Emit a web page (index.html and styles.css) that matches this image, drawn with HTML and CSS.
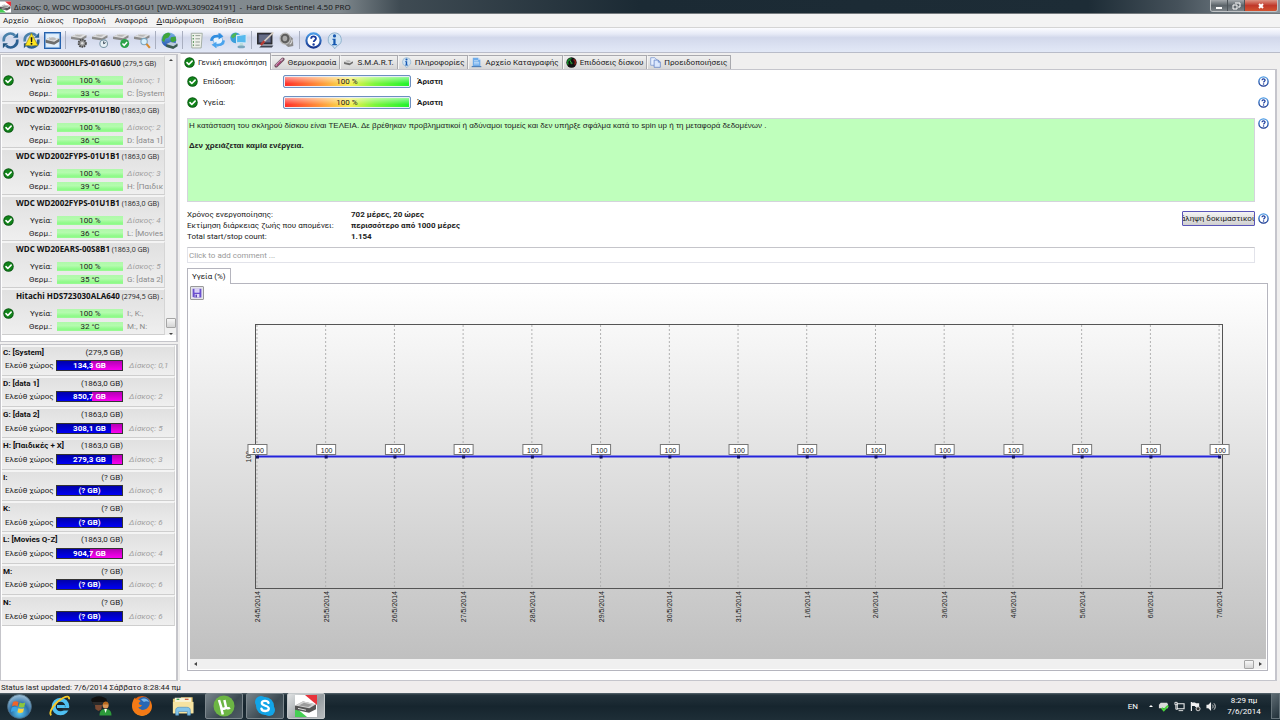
FILE: index.html
```
<!DOCTYPE html>
<html lang="el">
<head>
    <meta charset="UTF-8">
    <meta name="viewport" content="width=device-width, initial-scale=1.0">
    <title>Hard Disk Sentinel 4.50 PRO</title>
    <link rel="stylesheet" href="styles.css">
</head>
<body>
    <svg class="sprite" aria-hidden="true">
        <defs>
            <linearGradient id="g-blue" x1="0" y1="0" x2="0" y2="1"><stop offset="0" stop-color="#7fb6e8"/><stop offset="1" stop-color="#1d4fae"/></linearGradient>
            <linearGradient id="g-help" x1="0" y1="0" x2="0" y2="1"><stop offset="0" stop-color="#4a9be6"/><stop offset="1" stop-color="#16358f"/></linearGradient>
            <radialGradient id="g-orb" cx="50%" cy="75%" r="75%"><stop offset="0" stop-color="#5fd0f5"/><stop offset=".5" stop-color="#2a6fa8"/><stop offset="1" stop-color="#a7c4d8"/></radialGradient>
            <radialGradient id="g-fox" cx="50%" cy="70%" r="70%"><stop offset="0" stop-color="#ffc22a"/><stop offset="1" stop-color="#e0560c"/></radialGradient>
        </defs>
        <symbol id="i-ok" viewBox="0 0 16 16"><circle cx="8" cy="8" r="7.6" fill="#0a5a12"/><circle cx="8" cy="8" r="6.3" fill="#11841a"/><path d="M4.4 8.2l2.6 2.7 4.8-5" fill="none" stroke="#fff" stroke-width="2.4" stroke-linecap="round" stroke-linejoin="round"/></symbol>
        <symbol id="i-help" viewBox="0 0 16 16"><circle cx="8" cy="8" r="6.7" fill="#fff" stroke="url(#g-help)" stroke-width="2"/><path d="M5.8 6.3c0-2.9 4.6-2.8 4.5-.1 0 1.6-2.1 1.5-2.1 3.3" fill="none" stroke="#17399c" stroke-width="1.7"/><circle cx="8.1" cy="11.8" r="1.1" fill="#17399c"/></symbol>
        <symbol id="i-info" viewBox="0 0 16 16"><path d="M8 .8a6.6 6.4 0 0 1 2.6 12.2L8.2 15.8 6.4 13.2A6.5 6.4 0 0 1 8 .8z" fill="#cfe3f3" stroke="#86abc8" stroke-width=".8"/><circle cx="8" cy="3.7" r="1.5" fill="#1557b0"/><path d="M6 6.3h3v5h1.2v1.2H5.9v-1.2h1V7.4H6z" fill="#1557b0"/></symbol>
        <symbol id="i-refresh" viewBox="0 0 16 16"><path d="M1.8 9A6.2 6.2 0 0 1 12.2 3.3" fill="none" stroke="#4a80ab" stroke-width="2.5"/><path d="M14.2 7A6.2 6.2 0 0 1 3.8 12.7" fill="none" stroke="#2b5f92" stroke-width="2.5"/><path d="M10.4 5.4h4.8V.8z" fill="#2a6496"/><path d="M5.6 10.6H.8v4.6z" fill="#23547f"/></symbol>
        <symbol id="i-warn" viewBox="0 0 16 16"><use href="#i-refresh"/><path d="M8 1.2l6 11.6H2z" fill="#ffe51e" stroke="#8d8410" stroke-width=".6"/><path d="M7.2 5h1.7l-.3 4.4H7.5z" fill="#111"/><circle cx="8" cy="11" r=".9" fill="#111"/></symbol>
        <symbol id="i-disk" viewBox="0 0 16 16"><path d="M1.5 7.4L6 4.8l8.5 1.6v2.5L9.6 12 1.5 10z" fill="#6e6e6e"/><path d="M1.5 7.2L6 4.6l8.5 1.6-4.9 3z" fill="#e4e4e4"/><ellipse cx="8" cy="6.7" rx="3.3" ry="1.2" fill="#bbb"/></symbol>
        <symbol id="i-diskbox" viewBox="0 0 16 16"><rect x=".6" y=".6" width="14.8" height="14.8" fill="#a9cdf2" stroke="#2561ad" stroke-width="1.2"/><rect x="2" y="2" width="12" height="12" fill="#e2effc"/><use href="#i-disk"/></symbol>
        <symbol id="i-drive" viewBox="0 0 16 16"><path d="M0 4.4l5.6-2.6 9 1.3v2L9.5 8 0 6.7z" fill="#8a8a8a"/><path d="M0 4.2l5.6-2.6 9 1.3-5.1 3z" fill="#dedede"/><path d="M3 3.8l3-1.2 5 .8-2.5 1.1z" fill="#b4b4b4"/></symbol>
        <symbol id="i-drive-gear" viewBox="0 0 16 16"><use href="#i-drive"/><circle cx="10.6" cy="10.6" r="3.4" fill="#999" stroke="#4b4b4b" stroke-width="1.8" stroke-dasharray="1.5 .7"/><circle cx="10.6" cy="10.6" r="1.2" fill="#ddd"/></symbol>
        <symbol id="i-drive-clock" viewBox="0 0 16 16"><use href="#i-drive"/><circle cx="11" cy="11" r="3.6" fill="#e7f0f5" stroke="#7995a5"/><path d="M11 11V8.8M11 11l1.8-1" stroke="#234" stroke-width=".9"/></symbol>
        <symbol id="i-drive-ok" viewBox="0 0 16 16"><use href="#i-drive"/><circle cx="11" cy="10.8" r="4.2" fill="#2ca34a"/><path d="M8.9 10.8l1.6 1.7 2.8-3.1" fill="none" stroke="#fff" stroke-width="1.4"/></symbol>
        <symbol id="i-drive-find" viewBox="0 0 16 16"><use href="#i-drive"/><circle cx="9.5" cy="9" r="3" fill="#d6effc" stroke="#7ca5be"/><path d="M11.7 11.2l3.2 3.8" stroke="#d88b2f" stroke-width="2"/></symbol>
        <symbol id="i-globe" viewBox="0 0 16 16"><circle cx="7.4" cy="7.4" r="7" fill="url(#g-blue)"/><path d="M2 3.5C5-.4 8 .6 9 2L7 5.2 4 6.3 3 9.6.9 8zM9.4 5l4.4-.8.5 4-3.6 1.6-2-2z" fill="#3fa53a"/><path d="M5 11.6l4-2 6.6 1.5v2.3L11.5 16 5 14z" fill="#3b5a50"/><path d="M5 11.4l4-2 6.6 1.5-4 2.4z" fill="#bcd"/></symbol>
        <symbol id="i-report" viewBox="0 0 16 16"><path d="M3 1.2h10.4L12.4 15H3.6z" fill="#eef1ea" stroke="#9ba59b" stroke-width=".8"/><path d="M4.4 3.4h1M4.4 6.4h1M4.6 9.4h1M4.6 12.4h1" stroke="#367f3d" stroke-width="1.3"/><path d="M7 3.4h4.6M7 6.4h4.3M7 9.4h4.2M7 12.4h4" stroke="#929a92" stroke-width=".9"/></symbol>
        <symbol id="i-send" viewBox="0 0 16 16"><path d="M3 4.6l8-3 3 9.5-8 3.2z" fill="#e8f4ff" stroke="#6aa6dc" stroke-width=".7"/><path d="M1 8.2C1.4 3.6 5 2 9 3V.8L13.6 4 9 7V5.2C6 4.7 4 5.6 3.4 8.4z" fill="#2f8de0"/><path d="M15 8c-.4 4.4-4 6-8 5v2.2L2.4 12 7 9.2V11c3 .5 5-.4 5.6-3.2z" fill="#4ba4ee"/></symbol>
        <symbol id="i-remote" viewBox="0 0 16 16"><circle cx="5.3" cy="5.5" r="5" fill="#3c9edb"/><path d="M1 4.4C2 1.5 4.5.4 6.5 1L5.4 4.1 2.8 6z" fill="#4fb556"/><path d="M6.2 3.4l9-1.2v8.2l-9-.6z" fill="#56b9ee" stroke="#dcecf6" stroke-width="1"/><path d="M9.5 10.4h2.5l.8 3.4H8.4z" fill="#bdd"/><ellipse cx="10.6" cy="14" rx="3.6" ry="1.2" fill="#7aa6bd"/></symbol>
        <symbol id="i-config" viewBox="0 0 16 16"><rect x=".6" y="1.2" width="13.4" height="10" fill="#3b3f56" stroke="#222"/><rect x="2" y="2.6" width="10.6" height="7" fill="#666d87"/><path d="M2 14.6h12l1.4-2H4.2z" fill="#3d4350"/><path d="M15.4.4L5 10.6" stroke="#d9d0c5" stroke-width="1.6"/><path d="M7 8.6l-3.4 3.6" stroke="#b73a33" stroke-width="2.2"/></symbol>
        <symbol id="i-sound" viewBox="0 0 16 16"><path d="M2 3.2L8 .6l6 5.4.4 7.2-4.8 1L2 8z" fill="#8a8a8a"/><ellipse cx="6.7" cy="6.2" rx="4.8" ry="5.2" fill="#5e5e5e" stroke="#bbb" stroke-width="1.1"/><ellipse cx="6.5" cy="6.2" rx="2.2" ry="2.6" fill="#aaa"/><path d="M11 11.6c1.8-1 2.3-2.6 2.2-4.4" fill="none" stroke="#ddd"/></symbol>
        <symbol id="i-thermo" viewBox="0 0 16 16"><path d="M3.2 12.8L12.8 3.2" stroke="#6e4a5b" stroke-width="5" stroke-linecap="round"/><path d="M3.4 12L12.2 3.2" stroke="#c8a0b8" stroke-width="2.6" stroke-linecap="round"/><path d="M4 12.4l6-6" stroke="#a8316c" stroke-width="1.6"/></symbol>
        <symbol id="i-log" viewBox="0 0 16 16"><path d="M2.6 1h8l3 3v9h-11z" fill="#6facea"/><path d="M10.6 1v3h3z" fill="#d8eaff"/><path d="M4.4 5.5h6M4.4 7.8h7.4M4.4 10h7.4" stroke="#e2f0ff" stroke-width="1"/><path d="M1 13.2h14v1.6H1z" fill="#4679b5"/></symbol>
        <symbol id="i-gauge" viewBox="0 0 16 16"><circle cx="8" cy="8" r="7.5" fill="#111"/><path d="M3.2 11A5.6 5.6 0 0 1 8 2.4" fill="none" stroke="#15942c" stroke-width="2"/><path d="M11 3.4A5.6 5.6 0 0 1 12.6 11" fill="none" stroke="#8e1d16" stroke-width="2"/><path d="M8 9L5.6 4.6" stroke="#37df4e" stroke-width="1.2"/><circle cx="8" cy="9" r="1.5" fill="#26862f"/></symbol>
        <symbol id="i-pages" viewBox="0 0 16 16"><path d="M1 1h6l3 3v8H1z" fill="#e8f0ff" stroke="#6f8fcc"/><path d="M6 4.5h6l3 3V15H6z" fill="#dbe7fd" stroke="#5577c0"/><path d="M12 4.5v3h3" fill="none" stroke="#5577c0"/></symbol>
        <symbol id="i-save" viewBox="0 0 16 16"><path d="M1 1h14v14H3l-2-2z" fill="#6a4fcf"/><rect x="4" y="1" width="8" height="6.4" fill="#e9e4fb"/><path d="M5 3h6M5 5h6" stroke="#b3a5e6" stroke-width=".8"/><rect x="4.4" y="9.6" width="7.4" height="5.4" fill="#e2dcf6"/><rect x="5.6" y="10.6" width="2.2" height="4.4" fill="#4a33a6"/></symbol>
        <symbol id="i-app" viewBox="0 0 22 22"><path d="M0 0h22v22H0z" fill="#fff"/><path d="M10 0h12v10z" fill="#e8333b"/><path d="M0 12v10h12z" fill="#45cf54"/><path d="M0 10.8l8-4.4 13 3v4.8l-7 3.6-14-3z" fill="#555"/><path d="M0 10.6l8-4.4 13 3-6.6 4z" fill="#d2d2d2"/><path d="M4 10.4l5-2.6 8 1.9-3.6 2.2z" fill="#9b9b9b"/><path d="M3 13.4l8 1.8" stroke="#ddd"/></symbol>
        <symbol id="i-orb" viewBox="0 0 26 26"><circle cx="13" cy="13" r="12.4" fill="url(#g-orb)" stroke="#4d6d82" stroke-width=".8"/><path d="M6.2 8.3c2-1.2 3.8-1 5.8.1l-1 4.5c-2-1-3.8-1.2-5.8 0z" fill="#f0642a"/><path d="M13.2 8.8c2 1 3.8 1 5.8 0l-1 4.6c-2 1-3.8 1-5.8-.1z" fill="#8cc63c"/><path d="M4.8 14.2c2-1.2 3.9-1 5.8.1l-1 4.4c-2-1-3.7-1.1-5.6 0z" fill="#39a5e8"/><path d="M11.9 14.7c2 1 3.8 1 5.8 0l-1 4.4c-2 1-3.8 1-5.8-.1z" fill="#ffd23a"/></symbol>
        <symbol id="i-ie" viewBox="0 0 22 22"><circle cx="11.5" cy="11.5" r="6.8" fill="none" stroke="#4fc0f2" stroke-width="4"/><path d="M8 10h7.8l.2 3H8z" fill="#4fc0f2"/><path d="M13 13h8l-.4 2.4H14z" fill="#1f2e38"/><path d="M2.2 20.4C-1 17 6 7 14 3c4-2 6.6-2 6 1.2" fill="none" stroke="#f6c927" stroke-width="1.9"/></symbol>
        <symbol id="i-guard" viewBox="0 0 22 22"><path d="M1 5c3-5 13-5 16 0l-1 4H3z" fill="#111"/><path d="M2 7h15l-1.5 3.2H4z" fill="#2a2a2a"/><path d="M5 10h7l-.6 4.4-3 1.6-3-2z" fill="#7a4a33"/><circle cx="15.6" cy="10.5" r="3" fill="#d99655"/><path d="M12.8 9.6c.4-4 5.4-4 6 0z" fill="#b9691d"/><path d="M9.5 20.5c0-5 2.5-6.5 6-6.5s6 1.5 6 6.5z" fill="#2c9a3a"/><path d="M14.2 14H17l-1.4 4z" fill="#fff"/></symbol>
        <symbol id="i-firefox" viewBox="0 0 22 22"><circle cx="11" cy="11" r="10" fill="url(#g-fox)"/><circle cx="12.6" cy="8.8" r="6.8" fill="#2767b4"/><path d="M10 4.5c3-2 7-.5 8 2.5-2-1-4-.8-5 0z" fill="#79b7ea"/><path d="M1.4 8C2 4.6 3.4 3 4.2 2.4c0 1.4.6 2 1.6 2.5 1.7-.2 3 .3 3.8 1.3L7.6 8c.4 1.8 2 2 3.4 2-1 2-2.6 2.4-4 2 2.6 4.5 9 3.6 11.2-1.4.8-2 .6-3.4.2-4.8 3 3 3 8.5 0 11.7C11 24.500-.5 19 1.400 8z" fill="#f47a16"/></symbol>
        <symbol id="i-folder" viewBox="0 0 24 22"><path d="M1 3h8l1-1.5h12.5V19H1z" fill="#e3c56d"/><path d="M3 2h18v6H3z" fill="#f7f3d8"/><path d="M5 3h3v1.4H5z" fill="#3aa655"/><path d="M14 3h4v1.4h-4z" fill="#d35b3c"/><path d="M1 6.5h22.5V19H1z" fill="#f6e3a1"/><path d="M4 21v-5c0-3 2-3.6 4-3.6h8c2.500 0 4 .8 4 3.600v5h-3.200v-4H7.200v4z" fill="#82c4ea" stroke="#4d8fbd" stroke-width=".7"/></symbol>
        <symbol id="i-utorrent" viewBox="0 0 22 22"><circle cx="11" cy="11" r="10.5" fill="#6cb544"/><path d="M6 5l2.2 7.2c.6 2.4 4.6 2 4.7-.4L11.4 5M12.9 11.8c.5 1.7 2.6 2 4 .8M8 12l1.8 7.5" fill="none" stroke="#fff" stroke-width="2.5"/></symbol>
        <symbol id="i-skype" viewBox="0 0 22 22"><circle cx="7" cy="7" r="6" fill="#12a5e8"/><circle cx="15" cy="15" r="6" fill="#12a5e8"/><circle cx="11" cy="11" r="9" fill="#12a5e8"/><path d="M14.5 7.8c-.8-2.6-6.7-2.6-6.7.3 0 3.3 7 2 7 5.5 0 3.2-6.600 3.200-7.400 0" fill="none" stroke="#fff" stroke-width="2.3" stroke-linecap="round"/></symbol>
        <symbol id="i-eject" viewBox="0 0 12 12"><path d="M1 4l2-2h7l1 2v4H1z" fill="#d9d9d9"/><path d="M4 7.5L6.300 10 11 5" fill="none" stroke="#48d43a" stroke-width="2.2"/></symbol>
        <symbol id="i-net" viewBox="0 0 12 12"><path d="M3.5 3H11v5.5H3.5z" fill="none" stroke="#eee" stroke-width="1.2"/><path d="M5 10.5h5M1 1.5h2.500V4H1zM2 4v5h2" fill="none" stroke="#eee"/></symbol>
        <symbol id="i-flag" viewBox="0 0 12 12"><path d="M1.5 1v10" stroke="#fff" stroke-width="1.2"/><path d="M2 1.5h3.500l1 1H10v4H6l-1-1H2z" fill="#f2f2f2"/><circle cx="8.8" cy="8.5" r="2.2" fill="#333" stroke="#ddd"/></symbol>
        <symbol id="i-vol" viewBox="0 0 12 12"><path d="M.5 4.200h2L5.500 1v10L2.500 7.800h-2z" fill="#eee"/><path d="M7 4c1 1.200 1 2.800 0 4M8.700 2.500c1.900 2 1.900 5 0 7" fill="none" stroke="#ddd"/></symbol>
    </svg>

    <header class="titlebar">
        <svg class="title-icon"><use href="#i-app"/></svg>
        <h1>Δίσκος: 0, WDC WD3000HLFS-01G6U1 [WD-WXL309024191]&nbsp; - &nbsp;Hard Disk Sentinel 4.50 PRO</h1>
        <div class="window-buttons">
            <button class="win-btn" aria-label="Minimize"><svg viewBox="0 0 10 8"><path d="M2 5h6v2H2z" fill="#fff"/></svg></button>
            <button class="win-btn" aria-label="Restore"><svg viewBox="0 0 10 8"><path d="M4 1h5v4H7M2 3h4v4H2z" fill="none" stroke="#fff"/></svg></button>
            <button class="win-btn win-close" aria-label="Close"><svg viewBox="0 0 10 8"><path d="M3 2l4 4M7 2L3 6" stroke="#fff" stroke-width="2"/></svg></button>
        </div>
    </header>

    <nav class="menubar">
        <button>Αρχείο</button>
        <button>Δίσκος</button>
        <button>Προβολή</button>
        <button>Αναφορά</button>
        <button><u>Δ</u>ιαμόρφωση</button>
        <button>Βοήθεια</button>
    </nav>

    <div class="toolbar">
        <button aria-label="Refresh"><svg><use href="#i-refresh"/></svg></button>
        <button aria-label="Refresh warnings"><svg><use href="#i-warn"/></svg></button>
        <button aria-label="Disk panel"><svg><use href="#i-diskbox"/></svg></button>
        <span class="sep"></span>
        <button aria-label="Disk settings"><svg><use href="#i-drive-gear"/></svg></button>
        <button aria-label="Short test"><svg><use href="#i-drive-clock"/></svg></button>
        <button aria-label="Extended test"><svg><use href="#i-drive-ok"/></svg></button>
        <button aria-label="Surface test"><svg><use href="#i-drive-find"/></svg></button>
        <span class="sep"></span>
        <button aria-label="Online"><svg><use href="#i-globe"/></svg></button>
        <span class="sep"></span>
        <button aria-label="Report"><svg><use href="#i-report"/></svg></button>
        <button aria-label="Send report"><svg><use href="#i-send"/></svg></button>
        <button aria-label="Remote status"><svg><use href="#i-remote"/></svg></button>
        <span class="sep"></span>
        <button aria-label="Configuration"><svg><use href="#i-config"/></svg></button>
        <button aria-label="Acoustic"><svg><use href="#i-sound"/></svg></button>
        <span class="sep"></span>
        <button aria-label="Help"><svg><use href="#i-help"/></svg></button>
        <button aria-label="About"><svg><use href="#i-info"/></svg></button>
    </div>

    <div class="workspace">
        <aside class="sidebar">
            <section class="panel disks">
                <div class="disk-list" id="disks"></div>
                <div class="scroll-v">
                    <span class="arrow up"></span>
                    <span class="thumb"></span>
                    <span class="arrow down"></span>
                </div>
            </section>
            <section class="panel volumes">
                <div class="volume-list" id="volumes"></div>
            </section>
        </aside>

        <main class="main">
            <div class="tabs">
                <button class="tab active"><svg><use href="#i-ok"/></svg>Γενική επισκόπηση</button>
                <button class="tab"><svg><use href="#i-thermo"/></svg>Θερμοκρασία</button>
                <button class="tab"><svg><use href="#i-disk"/></svg>S.M.A.R.T.</button>
                <button class="tab"><svg><use href="#i-info"/></svg>Πληροφορίες</button>
                <button class="tab"><svg><use href="#i-log"/></svg>Αρχείο Καταγραφής</button>
                <button class="tab"><svg><use href="#i-gauge"/></svg>Επιδόσεις δίσκου</button>
                <button class="tab"><svg><use href="#i-pages"/></svg>Προειδοποιήσεις</button>
            </div>
            <div class="page">
                <div class="score">
                    <svg class="ok"><use href="#i-ok"/></svg>
                    <span class="score-name">Επίδοση:</span>
                    <span class="meter">100 %</span>
                    <b>Άριστη</b>
                    <button class="help" aria-label="Help"><svg><use href="#i-help"/></svg></button>
                </div>
                <div class="score">
                    <svg class="ok"><use href="#i-ok"/></svg>
                    <span class="score-name">Υγεία:</span>
                    <span class="meter">100 %</span>
                    <b>Άριστη</b>
                    <button class="help" aria-label="Help"><svg><use href="#i-help"/></svg></button>
                </div>
                <div class="status-row">
                    <div class="status-text">
                        <p>Η κατάσταση του σκληρού δίσκου είναι ΤΕΛΕΙΑ. Δε βρέθηκαν προβληματικοί ή αδύναμοι τομείς και δεν υπήρξε σφάλμα κατά το spin up ή τη μεταφορά δεδομένων .</p>
                        <p><b>Δεν χρειάζεται καμία ενέργεια.</b></p>
                    </div>
                    <button class="help" aria-label="Help"><svg><use href="#i-help"/></svg></button>
                </div>
                <div class="facts-row">
                    <dl class="facts">
                        <dt>Χρόνος ενεργοποίησης:</dt><dd>702 μέρες, 20 ώρες</dd>
                        <dt>Εκτίμηση διάρκειας ζωής που απομένει:</dt><dd>περισσότερο από 1000 μέρες</dd>
                        <dt>Total start/stop count:</dt><dd>1.154</dd>
                    </dl>
                    <button class="repeat"><span>άληψη δοκιμαστικού</span></button>
                    <button class="help" aria-label="Help"><svg><use href="#i-help"/></svg></button>
                </div>
                <input class="comment" type="text" placeholder="Click to add comment ..." aria-label="Comment">
                <button class="chart-tab">Υγεία (%)</button>
                <section class="chart">
                    <div class="chart-area">
                        <button class="save" aria-label="Save"><svg><use href="#i-save"/></svg></button>
                        <div class="plot"><svg id="plot"></svg></div>
                    </div>
                    <div class="scroll-h">
                        <span class="arrow left"></span>
                        <span class="thumb"></span>
                        <span class="arrow right"></span>
                    </div>
                </section>
            </div>
        </main>
    </div>

    <div class="statusbar">Status last updated: 7/6/2014 Σάββατο 8:28:44 πμ</div>

    <footer class="taskbar">
        <button class="task" aria-label="Start"><svg class="orb"><use href="#i-orb"/></svg></button>
        <button class="task" aria-label="Internet Explorer"><svg><use href="#i-ie"/></svg></button>
        <button class="task" aria-label="Messenger"><svg><use href="#i-guard"/></svg></button>
        <button class="task" aria-label="Firefox"><svg><use href="#i-firefox"/></svg></button>
        <button class="task" aria-label="Explorer"><svg><use href="#i-folder"/></svg></button>
        <button class="task open" aria-label="uTorrent"><svg><use href="#i-utorrent"/></svg></button>
        <button class="task open" aria-label="Skype"><svg><use href="#i-skype"/></svg></button>
        <button class="task open current" aria-label="Hard Disk Sentinel"><svg><use href="#i-app"/></svg></button>
        <div class="tray">
            <span class="lang">EN</span>
            <span class="arrow up light"></span>
            <svg><use href="#i-eject"/></svg>
            <svg><use href="#i-net"/></svg>
            <svg><use href="#i-flag"/></svg>
            <svg><use href="#i-vol"/></svg>
            <div class="clock">8:29 πμ<br>7/6/2014</div>
            <button class="show-desktop" aria-label="Show desktop"></button>
        </div>
    </footer>

    <script src="script.js"></script>
</body>
</html>
```
FILE: styles.css
```
* {
    box-sizing: border-box;
}
body {
    margin: 0;
    height: 100vh;
    display: flex;
    flex-direction: column;
    overflow: hidden;
    background: #f0efef;
    color: #222;
    font-family: Roboto, "Open Sans", sans-serif;
    font-size: 8px;
    line-height: 11px;
}
button, input {
    font: inherit;
    color: inherit;
    margin: 0;
    padding: 0;
    border: 0;
    background: none;
}
svg {
    display: block;
    flex: none;
}
.sprite {
    position: absolute;
    width: 0;
    height: 0;
}

/* window frame */
.titlebar {
    flex: none;
    display: flex;
    align-items: center;
    height: 14px;
    background: linear-gradient(90deg, #8b9196 0, #7e878c 340px, #3f4b53 400px, #1b2a34 50%, #1d2c36 85%, #45515a 92%, #8b959c 100%);
    border-bottom: 1px solid #747a7e;
}
.title-icon {
    width: 11px;
    height: 12px;
}
.titlebar h1 {
    flex: 1;
    margin: 0 0 0 3px;
    font-size: 8px;
    font-family: "Open Sans", sans-serif;
    font-weight: 400;
    color: #141414;
    white-space: nowrap;
}
.window-buttons {
    display: flex;
    align-self: flex-start;
    margin-right: 2px;
    border: 1px solid #c0c4c6;
    border-top: 0;
    border-radius: 0 0 3px 3px;
    overflow: hidden;
}
.win-btn {
    width: 17px;
    height: 11px;
    background: linear-gradient(#a3a8ac, #5c646a 50%, #7d8489);
    border-right: 1px solid #4c5358;
}
.win-btn svg {
    width: 10px;
    height: 8px;
    margin: 0 auto;
}
.win-close {
    width: 32px;
    border: 0;
    background: linear-gradient(#dc9484, #c0392a 50%, #d4532f);
}
.menubar {
    flex: none;
    display: flex;
    gap: 9px;
    height: 14px;
    padding-left: 3px;
    background: #f3f3f3;
    border-bottom: 1px solid #d4d4d4;
}
.toolbar {
    flex: none;
    display: flex;
    align-items: center;
    height: 25px;
    background: linear-gradient(#fbfcff, #e6eaf6 25%, #d2d8eb 40%, #dde3f3 80%, #e2e8f6);
    border-bottom: 1px solid #b9bcc9;
}
.toolbar button {
    width: 21px;
}
.toolbar svg {
    width: 17px;
    height: 17px;
    margin: 0 auto;
}
.sep {
    width: 1px;
    height: 18px;
    margin: 0 3px 0 2px;
    background: #a9afc0;
}

/* left side */
.workspace {
    flex: 1;
    min-height: 0;
    display: flex;
    gap: 2px;
}
.sidebar {
    flex: none;
    width: 178px;
    display: flex;
    flex-direction: column;
    gap: 2px;
    padding-top: 1px;
}
.panel {
    background: #fff;
    border: 1px solid #c5c5ca;
    border-width: 1px 2px 1px 1px;
}
.disks {
    flex: 45;
    display: flex;
    padding-bottom: 6px;
}
.disk-list {
    flex: 1;
    min-width: 0;
    display: grid;
    grid-auto-rows: 1fr;
    padding-left: 1px;
}
.disk, .volume {
    background: linear-gradient(#e0e0e0, #efefef);
    border-top: 2px solid #f4f4f4;
    border-bottom: 1px solid #cecece;
    border-right: 1px solid #d5d5d5;
    overflow: hidden;
    white-space: nowrap;
}
.disk h2 {
    margin: 0 0 5px 14px;
    font-family: "Open Sans", sans-serif;
    font-size: 7px;
    line-height: 11px;
    font-weight: 400;
}
.disk h2 b {
    font-size: 8px;
}
.disk h2 b, .volume b {
    color: #111;
}
.disk-body {
    display: grid;
    grid-template-columns: 14px 33px 69px 1fr;
    column-gap: 2px;
    grid-auto-rows: 13px;
    align-items: center;
    padding-left: 1px;
}
.disk-body .ok {
    width: 11px;
    height: 11px;
}
.disk-body .label {
    text-align: right;
}
.disk-body .label.temp {
    grid-column: 2;
}
.good {
    height: 9px;
    margin-left: 3px;
    line-height: 9px;
    text-align: center;
    background: linear-gradient(#aff9aa, #b4fbae 40%, #8dfa87 80%, #9bfa96);
}
.where {
    padding-left: 2px;
    color: #8b8b8b;
}
.where.num, .volume .num {
    font-style: italic;
    color: #a0a0a0;
}
.volumes {
    flex: 54;
}
.volume-list {
    display: grid;
    grid-auto-rows: 1fr;
    height: 84%;
    padding: 0 1px;
}
.volume {
    display: grid;
    grid-template-columns: 53px 67px 1fr;
    grid-template-rows: 11px 16px;
    align-items: center;
    padding-left: 1px;
}
.volume-head {
    grid-column: 1 / 3;
    display: flex;
    justify-content: space-between;
}
.volume .free {
    grid-column: 1;
    padding-left: 2px;
}
.volume .num {
    grid-column: 3;
    padding-left: 6px;
}
.space {
    height: 11px;
    display: flex;
    position: relative;
    border: 1px solid #333;
    background: linear-gradient(#b400b4, #fb00f2);
}
.space .used {
    background: linear-gradient(#0000a8, #0000f5);
}
.space .value {
    position: absolute;
    inset: 0;
    line-height: 10px;
    text-align: center;
    color: #fff;
    font-weight: 700;
}

/* scrollbars */
.arrow {
    border: 2px solid transparent;
}
.arrow.up {
    border-top: 0;
    border-bottom: 2px solid #444;
}
.arrow.down {
    border-bottom: 0;
    border-top: 2px solid #444;
}
.arrow.left {
    border-left: 0;
    border-right: 3px solid #444;
}
.arrow.right {
    border-right: 0;
    border-left: 3px solid #444;
}
.arrow.light {
    border-bottom-color: #fff;
}
.thumb {
    width: 10px;
    height: 10px;
    border: 1px solid #a5a5a5;
    border-radius: 1px;
    background: linear-gradient(#f7f7f7, #d4d4d4);
}
.scroll-v {
    width: 11px;
    display: flex;
    flex-direction: column;
    align-items: center;
    padding-top: 4px;
    background: #f0f0f0;
}
.scroll-v .thumb {
    margin: auto 0 5px;
}
.scroll-h {
    flex: none;
    display: flex;
    align-items: center;
    height: 10px;
    padding: 0 4px;
    background: #f0f0f0;
}
.scroll-h .thumb {
    height: 9px;
    margin: 0 5px 0 auto;
}

/* right side */
.main {
    flex: 1;
    min-width: 0;
    display: flex;
    flex-direction: column;
    padding-right: 3px;
}
.tabs {
    flex: none;
    display: flex;
    align-items: flex-end;
    height: 16px;
}
.tab {
    height: 14px;
    display: flex;
    align-items: center;
    gap: 3px;
    padding: 0 3px 0 2px;
    background: linear-gradient(#f0f0f0, #d6d6d6);
    border: 1px solid #a9a9ae;
    border-left-color: #f6f6f6;
    border-bottom: 0;
    white-space: nowrap;
}
.tab svg {
    width: 11px;
    height: 11px;
}
.tab.active {
    position: relative;
    height: 17px;
    margin-bottom: -1px;
    padding-left: 3px;
    background: #fff;
}
.page {
    flex: 1;
    min-height: 0;
    display: flex;
    flex-direction: column;
    padding: 1px 6px 9px 7px;
    background: #fff;
    border: 1px solid #c5c5cc;
    border-left: 0;
    border-right-width: 2px;
}
.score {
    flex: none;
    display: flex;
    align-items: center;
    height: 21px;
}
.ok {
    width: 11px;
    height: 11px;
}
.score .ok {
    margin-right: 5px;
}
.score-name {
    width: 80px;
}
.meter {
    width: 128px;
    height: 13px;
    margin-right: 6px;
    border: 1px solid #6d8fc0;
    border-radius: 2px;
    box-shadow: inset 0 0 0 1px #e8eef8;
    line-height: 11px;
    text-align: center;
    background: linear-gradient(rgba(255,255,255,.6), rgba(255,255,255,0) 70%), linear-gradient(90deg, #ff2c28, #ff9a3c 30%, #f6f050 52%, #7df63c 72%, #1ef22c);
}
.help {
    flex: none;
    margin-left: auto;
}
.help svg {
    width: 11px;
    height: 11px;
}
.status-row {
    flex: none;
    display: flex;
    align-items: flex-start;
    gap: 3px;
    margin-top: 5px;
}
.status-text {
    flex: 1;
    min-height: 84px;
    padding: 2px 1px;
    background: #bfffbc;
    border: 1px solid #d4d4dc;
    font-family: "Liberation Sans", Arial, sans-serif;
    font-size: 8px;
    line-height: 10px;
}
.status-text p {
    margin: 0 0 10px;
}
.facts-row {
    flex: none;
    display: flex;
    align-items: flex-start;
    gap: 3px;
    margin: 7px 0 5px;
}
.facts {
    flex: 1;
    display: grid;
    grid-template-columns: 164px 1fr;
    margin: 0;
}
.facts dd {
    margin: 0;
    font-weight: 700;
}
.repeat {
    width: 73px;
    height: 15px;
    margin-top: 2px;
    display: flex;
    justify-content: center;
    align-items: center;
    overflow: hidden;
    white-space: nowrap;
    border: 1px solid #5a55b8;
    border-radius: 1px;
    background: linear-gradient(#f4f4f4, #cfcfcf);
}
.facts-row .help {
    margin-top: 4px;
}
.comment {
    flex: none;
    width: auto;
    height: 16px;
    margin-right: 14px;
    padding: 0 1px;
    border: 1px solid #e2e3ea;
    border-top-color: #c5c5ca;
}
.comment::placeholder {
    color: #999;
}
.chart-tab {
    position: relative;
    align-self: flex-start;
    height: 16px;
    margin: 5px 0 -1px;
    padding: 0 4px;
    background: #fff;
    border: 1px solid #b5b5be;
    border-bottom: 0;
}
.chart {
    flex: 1;
    min-height: 0;
    display: flex;
    flex-direction: column;
    margin-right: 1px;
    padding: 0 1px 1px 2px;
    border: 1px solid #b5b5be;
}
.chart-area {
    flex: 1;
    min-height: 0;
    display: flex;
    flex-direction: column;
    padding: 2px 43px 70px 0;
    background: linear-gradient(#fff, #c0c0c0);
}
.save {
    flex: none;
    width: 14px;
    height: 14px;
    border: 1px solid #999;
    border-radius: 1px;
    background: #e4e4ea;
}
.save svg {
    width: 10px;
    height: 10px;
    margin: 0 auto;
}
.plot {
    flex: 1;
    min-height: 0;
    margin: 24px 0 0 65px;
    border: 1px solid #555;
}
.plot svg {
    overflow: visible;
}
#plot {
    width: 100%;
    height: 100%;
    font-family: "Liberation Sans", Arial, sans-serif;
    font-size: 7px;
    fill: #222;
}
.grid-line {
    stroke: #b2b2b2;
    stroke-dasharray: 2 2;
}
.series {
    stroke: #2424dc;
    stroke-width: 2;
}
.point-box {
    fill: #fff;
    stroke: #777;
}
.point {
    fill: #10106a;
}

/* bottom */
.statusbar {
    flex: none;
    height: 12px;
    line-height: 13px;
    padding-left: 1px;
    background: #f0eded;
}
.taskbar {
    flex: none;
    display: flex;
    height: 27px;
    padding-bottom: 1px;
    background: linear-gradient(#5c6a72, #23323b 2px, #16252e 50%, #1e2e37);
}
.task {
    width: 38px;
    margin-right: 3px;
    border: 1px solid transparent;
    border-radius: 2px;
}
.task svg {
    width: 22px;
    height: 22px;
    margin: 0 auto;
}
.task .orb {
    width: 25px;
    height: 25px;
}
.task.open {
    border-color: #7c878d;
    background: linear-gradient(135deg, #77838a, #3c4a52 60%, #4f5c64);
}
.task.current {
    border-color: #c4c8ca;
    background: linear-gradient(135deg, #e0e2e3, #969da1 60%, #b9bdc0);
}
.tray {
    margin-left: auto;
    display: flex;
    align-items: center;
    gap: 5px;
    color: #fff;
}
.tray svg {
    width: 11px;
    height: 11px;
}
.lang {
    margin-right: 6px;
}
.clock {
    width: 44px;
    text-align: center;
}
.show-desktop {
    align-self: stretch;
    width: 9px;
    border: 1px solid #66737a;
    background: linear-gradient(135deg, #5e6b73, #22313a);
}
```
FILE: script.js
```
const disks = [
    { name: 'WDC WD3000HLFS-01G6U0', size: '(279,5 GB)', temp: '33 °C', num: 'Δίσκος: 1', drive: 'C: [System' },
    { name: 'WDC WD2002FYPS-01U1B0', size: '(1863,0 GB)', temp: '36 °C', num: 'Δίσκος: 2', drive: 'D: [data 1]' },
    { name: 'WDC WD2002FYPS-01U1B1', size: '(1863,0 GB)', temp: '39 °C', num: 'Δίσκος: 3', drive: 'H: [Παιδικ' },
    { name: 'WDC WD2002FYPS-01U1B1', size: '(1863,0 GB)', temp: '36 °C', num: 'Δίσκος: 4', drive: 'L: [Movies' },
    { name: 'WDC WD20EARS-00S8B1', size: '(1863,0 GB)', temp: '35 °C', num: 'Δίσκος: 5', drive: 'G: [data 2]' },
    { name: 'Hitachi HDS723030ALA640', size: '(2794,5 GB) .', temp: '32 °C', letters: 'I:, K:,', drive: 'M:, N:' }
];

const volumes = [
    { name: 'C: [System]', size: '(279,5 GB)', free: '134,3 GB', used: 52, num: '0,1' },
    { name: 'D: [data 1]', size: '(1863,0 GB)', free: '850,7 GB', used: 54, num: '2' },
    { name: 'G: [data 2]', size: '(1863,0 GB)', free: '308,1 GB', used: 83, num: '5' },
    { name: 'H: [Παιδικές + X]', size: '(1863,0 GB)', free: '279,3 GB', used: 85, num: '3' },
    { name: 'I:', size: '(? GB)', free: '(? GB)', used: 100, num: '6' },
    { name: 'K:', size: '(? GB)', free: '(? GB)', used: 100, num: '6' },
    { name: 'L: [Movies Q-Z]', size: '(1863,0 GB)', free: '904,7 GB', used: 51, num: '4' },
    { name: 'M:', size: '(? GB)', free: '(? GB)', used: 100, num: '6' },
    { name: 'N:', size: '(? GB)', free: '(? GB)', used: 100, num: '6' }
];

const dates = ['24/5', '25/5', '26/5', '27/5', '28/5', '29/5', '30/5', '31/5', '1/6', '2/6', '3/6', '4/6', '5/6', '6/6', '7/6'];

document.getElementById('disks').innerHTML = disks.map(d => `
    <article class="disk">
        <h2><b>${d.name}</b> ${d.size}</h2>
        <div class="disk-body">
            <svg class="ok"><use href="#i-ok"/></svg>
            <span class="label">Υγεία:</span>
            <span class="good">100 %</span>
            <span class="where ${d.num ? 'num' : ''}">${d.num || d.letters}</span>
            <span class="label temp">Θερμ.:</span>
            <span class="good">${d.temp}</span>
            <span class="where">${d.drive}</span>
        </div>
    </article>`).join('');

document.getElementById('volumes').innerHTML = volumes.map(v => `
    <article class="volume">
        <div class="volume-head"><b>${v.name}</b><span>${v.size}</span></div>
        <span class="free">Ελεύθ χώρος</span>
        <div class="space"><span class="used" style="width: ${v.used}%"></span><span class="value">${v.free}</span></div>
        <span class="num">Δίσκος: ${v.num}</span>
    </article>`).join('');

// points are spread over the full plot width
const step = 99.6 / (dates.length - 1);
const xs = dates.map((d, i) => (0.1 + i * step).toFixed(2) + '%');

document.getElementById('plot').innerHTML =
    xs.map(x => `<line class="grid-line" x1="${x}" y1="0" x2="${x}" y2="100%"/>`).join('') +
    `<line class="series" x1="${xs[0]}" y1="50%" x2="${xs[xs.length - 1]}" y2="50%"/>` +
    `<svg x="0" y="50%"><text transform="translate(-5 6) rotate(-90)">100</text></svg>` +
    xs.map((x, i) => `
        <svg x="${x}" y="50%">
            <rect class="point" x="-1" y="-1" width="3" height="3"/>
            <rect class="point-box" x="-9" y="-12" width="19" height="10"/>
            <text x="1" y="-4" text-anchor="middle">100</text>
        </svg>
        <svg x="${x}" y="100%"><text transform="translate(3 3) rotate(-90)" text-anchor="end">${dates[i]}/2014</text></svg>`).join('');
```
